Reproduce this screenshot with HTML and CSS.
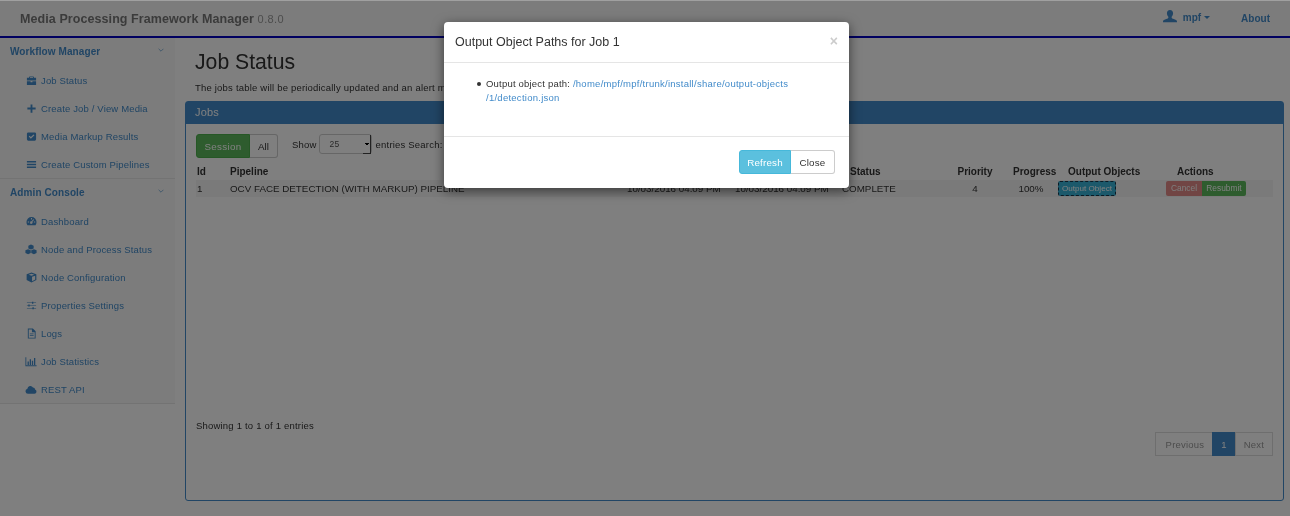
FILE: index.html
```html
<!DOCTYPE html>
<html lang="en">
<head>
  <meta charset="UTF-8" />
  <title>Job Status</title>
  <link rel="stylesheet" href="styles.css">
</head>
<body>
  <nav class="navbar">
    <div class="brand">Media Processing Framework Manager <small>0.8.0</small></div>
    <div class="nav-right">
      <a class="user-link">
        <svg class="user-icon" viewBox="0 0 16 16"><path d="M8 0c2.3 0 3.5 1.6 3.5 3.8 0 1.6-.7 3-1.6 3.9v1.2c0 .6 1 .9 2.4 1.4 1.9.7 3.7 1.200 3.700 2.700v1H0v-1c0-1.500 1.800-2 3.700-2.700 1.400-.5 2.400-.8 2.400-1.400V7.700C5.200 6.800 4.500 5.400 4.500 3.800 4.500 1.600 5.700 0 8 0z"/></svg>
        mpf <span class="caret"></span>
      </a>
      <a class="about-link">About</a>
    </div>
  </nav>

  <div class="page">
    <aside class="sidebar">
      <div class="side-group">
        <div class="side-head">Workflow Manager
          <svg class="angle" viewBox="0 0 10 6"><path d="M1 1l4 4 4-4"/></svg>
        </div>
        <a class="side-item">
          <svg class="ico" viewBox="0 0 12 12"><path d="M4 1.500h4l.7.7V3H11v3H1V3h2.300v-.8zM4.300 2.300V3h3.400v-.7zM1 6.800h4V8h2V6.800h4V11H1z"/></svg>
          Job Status</a>
        <a class="side-item">
          <svg class="ico" viewBox="0 0 12 12"><path d="M5 1.500h2V5h3.500v2H7v3.500H5V7H1.500V5H5z"/></svg>
          Create Job / View Media</a>
        <a class="side-item">
          <svg class="ico" viewBox="0 0 12 12"><path fill-rule="evenodd" d="M2.500 1.500h7a1.500 1.500 0 0 1 1.500 1.500v6a1.500 1.500 0 0 1-1.500 1.500h-7A1.500 1.500 0 0 1 1 9V3a1.500 1.500 0 0 1 1.500-1.500zM3 6l2.300 2.400L9.200 4.600 8.200 3.700 5.300 6.500 4 5.100z"/></svg>
          Media Markup Results</a>
        <a class="side-item">
          <svg class="ico" viewBox="0 0 12 12"><path d="M1 2.300h10v1.400H1zM1 5.300h10v1.400H1zM1 8.300h10v1.400H1z"/></svg>
          Create Custom Pipelines</a>
      </div>
      <div class="side-group">
        <div class="side-head">Admin Console
          <svg class="angle" viewBox="0 0 10 6"><path d="M1 1l4 4 4-4"/></svg>
        </div>
        <a class="side-item">
          <svg class="ico" viewBox="0 0 12 12"><path fill-rule="evenodd" d="M6 1a5.500 5.500 0 0 1 5.500 5.500c0 1.400-.4 2.500-1.100 3.500H1.600A5.500 5.500 0 0 1 .5 6.500 5.500 5.500 0 0 1 6 1zM5.400 2.300v1.500h1.200V2.300zM1.900 6v1.100h1.500V6zM8.600 6v1.100h1.500V6zM8 3.500 6.100 5.800a1.400 1.400 0 1 0 .9.600l1.900-2.300z"/></svg>
          Dashboard</a>
        <a class="side-item">
          <svg class="ico ico-wide" viewBox="0 0 14 12"><path d="M7 .3l3.100 1.200v3.300L7 6.100 3.900 4.800V1.500zM3.600 5.600l3.100 1.200v3.300l-3.100 1.400-3.100-1.400V6.800zM10.400 5.600l3.100 1.200v3.300l-3.100 1.400-3.100-1.400V6.800z"/></svg>
          Node and Process Status</a>
        <a class="side-item">
          <svg class="ico" viewBox="0 0 12 12"><path fill-rule="evenodd" d="M6 .5l5.300 1.900v6.400L6 11.500.7 8.800V2.400zM6 1.900 3 3 6 4.100 9 3zM6.600 5.200v4.800l3.400-1.800V4z"/></svg>
          Node Configuration</a>
        <a class="side-item">
          <svg class="ico" viewBox="0 0 12 12"><path d="M1 2.600h5.500V1.800H8v.8h3v.8H8v.8H6.500v-.8H1zM1 5.600h1.500v-.8H4v.8h7v.8H4v.8H2.500v-.8H1zM1 8.600h6v-.8h1.500v.8H11v.8H8.500v.8H7v-.8H1z"/></svg>
          Properties Settings</a>
        <a class="side-item">
          <svg class="ico" viewBox="0 0 12 12"><path fill-rule="evenodd" d="M2 .5h5.500L10.500 3.500V11.500H2zM3 1.500v9h6.500V4.500H6.500v-3zM4.200 6h4.100v.8H4.200zM4.200 7.700h4.100v.8H4.200z"/></svg>
          Logs</a>
        <a class="side-item">
          <svg class="ico ico-wide" viewBox="0 0 14 12"><path d="M.5 1h1v9.500h12v1H.5zM3 6h1.500v4H3zM5.500 3.500H7V10H5.500zM8 5h1.500v5H8zM10.500 2H12v8h-1.500z"/></svg>
          Job Statistics</a>
        <a class="side-item">
          <svg class="ico ico-wide" viewBox="0 0 14 12"><path d="M3.500 11A3 3 0 0 1 2.800 5.100 3.500 3.500 0 0 1 9.300 3.700 2.500 2.500 0 0 1 11.800 6 2.600 2.600 0 0 1 11 11z"/></svg>
          REST API</a>
      </div>
    </aside>

    <main class="content">
      <h1 class="page-title">Job Status</h1>
      <p class="lead-text">The jobs table will be periodically updated and an alert message will appear.</p>

      <section class="panel">
        <div class="panel-heading">Jobs</div>
        <div class="panel-body">
          <div class="toolbar">
            <div class="btn-group">
              <span class="btn btn-session">Session</span>
              <span class="btn btn-all">All</span>
            </div>
            <div class="length-label">Show
              <span class="fake-select">25<span class="select-arrow"></span></span>
              entries Search:
            </div>
          </div>

          <table class="jobs-table">
            <thead>
              <tr>
                <th class="col-id">Id</th>
                <th class="col-pipeline">Pipeline</th>
                <th class="col-date">Date Started</th>
                <th class="col-date2">Date Ended</th>
                <th class="col-status">Status</th>
                <th class="col-priority center">Priority</th>
                <th class="col-progress">Progress</th>
                <th class="col-output">Output Objects</th>
                <th class="col-actions">Actions</th>
              </tr>
            </thead>
            <tbody>
              <tr>
                <td>1</td>
                <td>OCV FACE DETECTION (WITH MARKUP) PIPELINE</td>
                <td>10/03/2016 04:09 PM</td>
                <td>10/03/2016 04:09 PM</td>
                <td>COMPLETE</td>
                <td class="center">4</td>
                <td class="center">100%</td>
                <td><span class="mini-btn mini-output">Output Object</span></td>
                <td class="cell-actions"><span class="mini-btn mini-cancel">Cancel</span><span class="mini-btn mini-resubmit">Resubmit</span></td>
              </tr>
            </tbody>
          </table>

          <div class="table-footer">
            <div class="table-info">Showing 1 to 1 of 1 entries</div>
            <div class="pager">
              <span class="page-btn page-prev">Previous</span>
              <span class="page-btn page-active">1</span>
              <span class="page-btn">Next</span>
            </div>
          </div>
        </div>
      </section>
    </main>
  </div>

  <div class="backdrop"></div>

  <div class="modal">
    <div class="modal-header">
      <h4 class="modal-title">Output Object Paths for Job 1</h4>
      <span class="modal-close">×</span>
    </div>
    <div class="modal-body">
      <ul class="path-list">
        <li>Output object path: <a class="path-link">/home/mpf/mpf/trunk/install/share/output-objects<br>/1/detection.json</a></li>
      </ul>
    </div>
    <div class="modal-footer">
      <span class="btn btn-refresh">Refresh</span><span class="btn btn-close">Close</span>
    </div>
  </div>
</body>
</html>
```

FILE: styles.css
```css
* {
  margin: 0;
  padding: 0;
  box-sizing: border-box;
}

body {
  font-family: "Liberation Sans", Arial, sans-serif;
  font-size: 10px;
  color: #333;
  background-color: #fff;
  height: 516px;
  overflow: hidden;
  display: flex;
  flex-direction: column;
}

/* own layers, so the text under the backdrop is not colour fringed */
.navbar,
.page,
.modal {
  will-change: transform;
}

/* top bar */
.navbar {
  height: 38px;
  flex: none;
  background-color: #f8f8f8;
  border-top: 1px solid #a0a0a0;
  border-bottom: 2px solid #0000c0;
  display: flex;
  justify-content: space-between;
  align-items: center;
  padding: 0 20px 0 20px;
}

.brand {
  font-size: 12.500px;
  font-weight: bold;
  color: #777;
  letter-spacing: .08px;
}

.brand small {
  font-size: 11px;
  font-weight: normal;
  letter-spacing: .4px;
  color: #999;
}

.nav-right {
  display: flex;
  align-items: center;
  gap: 31px;
}

.user-link,
.about-link {
  color: #428bca;
  font-weight: bold;
  font-size: 10px;
  display: flex;
  align-items: center;
}

.user-link {
  margin-top: -2px;
}

.user-icon {
  width: 14px;
  height: 14px;
  margin-right: 6px;
  margin-top: -2px;
  fill: #428bca;
}

.caret {
  width: 0;
  height: 0;
  margin-left: 3px;
  border-top: 3px solid #428bca;
  border-left: 3px solid transparent;
  border-right: 3px solid transparent;
}

/* page */
.page {
  flex: 1;
  display: flex;
  min-height: 0;
}

.sidebar {
  width: 175px;
  flex: none;
  align-self: flex-start;
  background-color: #f8f8f8;
}

.side-group {
  border-bottom: 1px solid #e7e7e7;
}

.side-head {
  height: 28px;
  padding: 0 10px 2px;
  display: flex;
  align-items: center;
  justify-content: space-between;
  font-size: 10px;
  font-weight: bold;
  letter-spacing: .1px;
  color: #428bca;
}

.angle {
  width: 6px;
  height: 4px;
  margin-right: 1px;
  margin-bottom: 2px;
  fill: none;
  stroke: #428bca;
  stroke-width: 1;
}

.side-item {
  height: 28px;
  padding-left: 26px;
  display: flex;
  align-items: center;
  gap: 4px;
  font-size: 9.500px;
  letter-spacing: .15px;
  color: #428bca;
}

.ico {
  width: 11px;
  height: 11px;
  flex: none;
  fill: #428bca;
}

.ico-wide {
  width: 12px;
  margin-left: -1px;
}

.content {
  flex: 1;
  min-width: 0;
  padding: 12px 6px 15px 10px;
  display: flex;
  flex-direction: column;
}

.page-title {
  font-size: 21.200px;
  font-weight: normal;
  line-height: 24px;
  margin-left: 10px;
  color: #333;
}

.lead-text {
  margin: 8px 0 0 10px;
  line-height: 12px;
  font-size: 9.500px;
  letter-spacing: .2px;
  white-space: nowrap;
}

/* jobs panel */
.panel {
  flex: 1;
  margin-top: 7px;
  border: 1px solid #428bca;
  border-radius: 3px;
  display: flex;
  flex-direction: column;
}

.panel-heading {
  height: 22px;
  flex: none;
  background-color: #428bca;
  color: #fff;
  font-size: 11px;
  line-height: 21px;
  padding-left: 9px;
  letter-spacing: .2px;
}

.panel-body {
  flex: 1;
  padding: 10px 10px 0;
  display: flex;
  flex-direction: column;
}

.toolbar {
  display: flex;
  align-items: flex-start;
  gap: 14px;
}

.btn-group {
  display: flex;
}

.btn {
  display: flex;
  align-items: center;
  justify-content: center;
  height: 24px;
  font-size: 9.800px;
  border: 1px solid #ccc;
  background-color: #fff;
  color: #333;
}

.btn-session {
  width: 54px;
  background-color: #5cb85c;
  border-color: #4cae4c;
  color: #fff;
  border-radius: 3px 0 0 3px;
  letter-spacing: .3px;
}

.btn-all {
  width: 28px;
  border-left: 0;
  border-radius: 0 3px 3px 0;
}

.length-label {
  display: flex;
  align-items: center;
  gap: 3px;
  height: 20px;
  font-size: 9.500px;
  letter-spacing: .2px;
  white-space: nowrap;
}

.fake-select {
  width: 53px;
  height: 20px;
  margin: 0 1px 0 -1px;
  padding-left: 10px;
  border: 1px solid #ccc;
  border-radius: 3px;
  font-size: 8.500px;
  display: flex;
  align-items: center;
  justify-content: space-between;
  color: #555;
}

.select-arrow {
  width: 8px;
  height: 19px;
  border-right: 1px solid #444;
  border-bottom: 1px solid #444;
  background: linear-gradient(#000, #000) 2px 8px / 4px 1px no-repeat,
    linear-gradient(#000, #000) 3px 9px / 2px 1px no-repeat;
}

.jobs-table {
  width: 1077px;
  margin-top: 5px;
  border-collapse: collapse;
  table-layout: fixed;
  font-size: 9.800px;
}

.jobs-table th {
  height: 17px;
  padding: 0 1px;
  text-align: left;
  font-size: 10px;
  font-weight: bold;
  color: #333;
  white-space: nowrap;
}

.jobs-table td {
  height: 17px;
  padding: 0 1px;
  background-color: #f5f5f5;
  white-space: nowrap;
}

.jobs-table .center {
  text-align: center;
}

.col-id { width: 33px; }
.col-pipeline { width: 397px; }
.col-date { width: 108px; }
.col-date2 { width: 107px; }
.jobs-table .col-status { width: 104px; padding-left: 9px; }
.col-priority { width: 60px; }
.jobs-table .col-progress { width: 52px; padding-left: 8px; }
.jobs-table .col-output { width: 90px; padding-left: 11px; }
.jobs-table .col-actions { padding-left: 30px; }
.jobs-table .cell-actions { padding-left: 19px; }

.mini-btn {
  display: inline-block;
  height: 15px;
  line-height: 13px;
  font-size: 8.100px;
  color: #fff;
  border: 1px solid transparent;
  padding: 0 3px;
  vertical-align: middle;
}

.mini-output {
  background-color: #39b3d7;
  border: 1px dashed #16344a;
  border-radius: 2px;
}

.mini-cancel {
  width: 36px;
  font-size: 8.400px;
  text-align: center;
  background-color: #d9534f;
  border-radius: 2px 0 0 2px;
  opacity: .65;
}

.mini-resubmit {
  width: 44px;
  font-size: 8.400px;
  text-align: center;
  background-color: #5cb85c;
  border-radius: 0 2px 2px 0;
}

.table-footer {
  flex: 1;
  display: flex;
  justify-content: space-between;
  align-items: flex-start;
  padding-top: 223px;
}

.table-info {
  font-size: 9.500px;
  letter-spacing: .2px;
  line-height: 12px;
}

.pager {
  display: flex;
  margin-top: 12px;
}

.page-btn {
  height: 24px;
  padding: 0 8px;
  display: flex;
  align-items: center;
  font-size: 9.500px;
  color: #999;
  background-color: #fff;
  border: 1px solid #ddd;
  margin-left: -1px;
  letter-spacing: .2px;
}

.page-prev {
  padding-left: 10px;
}

.page-active {
  background-color: #428bca;
  border-color: #428bca;
  color: #fff;
}

/* modal on top */
.backdrop {
  position: fixed;
  inset: 1px 0 0 0;
  background-color: #000;
  opacity: .5;
}

.modal {
  position: fixed;
  top: 22px;
  left: 444px;
  width: 405px;
  height: 166px;
  background-color: #fff;
  border-radius: 4px;
  box-shadow: 0 3px 12px rgba(0, 0, 0, .55);
  display: flex;
  flex-direction: column;
}

.modal-header {
  height: 41px;
  flex: none;
  padding: 0 11px;
  display: flex;
  justify-content: space-between;
  align-items: center;
  border-bottom: 1px solid #e5e5e5;
}

.modal-title {
  font-size: 12.500px;
  font-weight: normal;
  color: #333;
}

.modal-close {
  font-size: 14px;
  font-weight: bold;
  color: #ccc;
  margin-bottom: 3px;
}

.modal-body {
  height: 73px;
  flex: none;
  padding: 14px 11px 0;
}

.path-list {
  list-style: none;
  padding-left: 31px;
  font-size: 9.500px;
  line-height: 14px;
  letter-spacing: .2px;
}

.path-list li::before {
  content: "";
  display: inline-block;
  width: 4px;
  height: 4px;
  margin: 0 5px 1px -9px;
  border-radius: 50%;
  background-color: #333;
  vertical-align: middle;
}

.path-link {
  color: #428bca;
  letter-spacing: .26px;
}

.modal-footer {
  flex: 1;
  border-top: 1px solid #e5e5e5;
  display: flex;
  justify-content: flex-end;
  padding: 13px 14px 0 0;
}

.btn-refresh {
  width: 52px;
  background-color: #5bc0de;
  border-color: #46b8da;
  color: #fff;
  border-radius: 3px 0 0 3px;
  letter-spacing: .2px;
}

.btn-close {
  width: 44px;
  border-left: 0;
  border-radius: 0 3px 3px 0;
  letter-spacing: .2px;
}
```
